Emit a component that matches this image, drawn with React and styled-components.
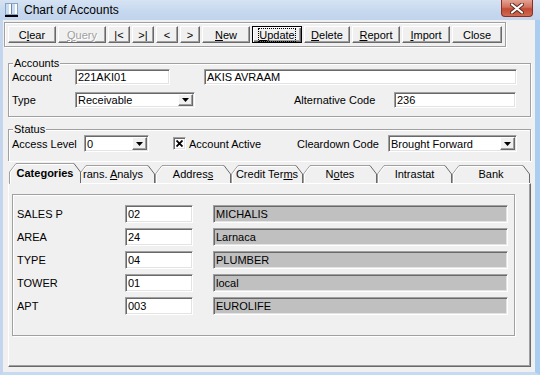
import React from "react";
import styled, { createGlobalStyle } from "styled-components";

const GlobalStyle = createGlobalStyle`
  html, body {
    margin: 0;
    padding: 0;
    background: #f0f0f0;
  }
  body {
    font-family: "Liberation Sans", Arial, sans-serif;
    font-size: 11px;
    color: #000;
  }
  u {
    text-decoration-thickness: 1px;
    text-underline-offset: 1px;
  }
`;

const toolButtons = [
  { text: "Clear", u: 1, w: 48 },
  { text: "Query", u: 0, w: 48, disabled: true },
  { text: "|<", w: 22 },
  { text: ">|", w: 22 },
  { text: "<", w: 22 },
  { text: ">", w: 20 },
  { text: "New", u: 0, w: 48 },
  { text: "Update", u: 0, w: 50, isDefault: true },
  { text: "Delete", u: 0, w: 46 },
  { text: "Report", u: 0, w: 48 },
  { text: "Import", u: 0, w: 48 },
  { text: "Close", w: 50 },
];

// "rans. Analys" is the clipped caption, so it sits against the left edge
const tabs = [
  { text: "Categories", u: 4, w: 68, active: true },
  { text: "rans. Analys", u: 6, w: 76, start: true },
  { text: "Address", u: 6, w: 76 },
  { text: "Credit Terms", u: 10, w: 72 },
  { text: "Notes", u: 1, w: 74 },
  { text: "Intrastat", w: 75 },
  { text: "Bank", w: 78 },
];

const categories = [
  { label: "SALES P", code: "02", desc: "MICHALIS" },
  { label: "AREA", code: "24", desc: "Larnaca" },
  { label: "TYPE", code: "04", desc: "PLUMBER" },
  { label: "TOWER", code: "01", desc: "local" },
  { label: "APT", code: "003", desc: "EUROLIFE" },
];

const Window = styled.div`
  width: 540px;
  height: 375px;
  display: flex;
  flex-direction: column;
  overflow: hidden;
`;

const TitleBar = styled.div`
  height: 20px;
  flex: none;
  display: flex;
  align-items: flex-start;
  padding-left: 4px;
  background: linear-gradient(to bottom, #d5e3f3 0%, #c6d8ee 60%, #c0d4ec 100%);
`;

const TitleIcon = styled.svg`
  margin-top: 3px;
  flex: none;
`;

const TitleText = styled.div`
  font-size: 12px;
  line-height: 20px;
  margin-left: 5px;
  color: #000;
`;

const CloseBox = styled.div`
  margin-left: auto;
  margin-right: 7px;
  width: 32px;
  height: 17px;
  box-sizing: border-box;
  border: 1px solid #8c2f22;
  border-top: none;
  border-radius: 0 0 4px 4px;
  background: linear-gradient(to bottom, #e4a394 0%, #d2705c 45%, #c24a34 55%, #cf6a51 100%);
  display: flex;
  align-items: center;
  justify-content: center;
`;

const Frame = styled.div`
  flex: 1;
  display: flex;
  flex-direction: column;
  background: #f0f0f0;
  border-left: 3px solid #c3d6ee;
  border-right: 5px solid #abcdef;
  border-bottom: 3px solid #c6daf1;
`;

const Toolbar = styled.div`
  display: flex;
  gap: 2px;
  width: fit-content;
  margin: 2px 0 0 1px;
  padding: 3px;
  border: 1px solid #a0a0a0;
  box-shadow: inset 1px 1px 0 #fff, 1px 1px 0 #fff;
`;

const ToolButton = styled.div`
  width: ${({ $w }) => $w}px;
  height: 17px;
  box-sizing: border-box;
  display: flex;
  align-items: center;
  justify-content: center;
  background: #f0f0f0;
  font-size: 11px;
  color: ${({ $disabled }) => ($disabled ? "#a0a0a0" : "#000")};
  text-shadow: ${({ $disabled }) => ($disabled ? "1px 1px 0 #fff" : "none")};
  border: 1px solid;
  border-color: ${({ $default }) =>
    $default ? "#000" : "#fff #696969 #696969 #fff"};
  box-shadow: ${({ $default }) =>
    $default
      ? "inset 1px 1px 0 #fff, inset -1px -1px 0 #696969, inset -2px -2px 0 #a0a0a0"
      : "inset -1px -1px 0 #a0a0a0"};
`;

const FocusText = styled.span`
  outline: 1px dotted #000;
  outline-offset: 0;
  line-height: 12px;
`;

const GroupBox = styled.fieldset`
  margin: ${({ $top }) => $top}px 4px 0 5px;
  padding: 0 4px ${({ $bottom }) => $bottom}px 3px;
  min-width: 0;
  border: 1px solid #a0a0a0;
  border-bottom: ${({ $open }) => ($open ? "none" : "1px solid #a0a0a0")};
  box-shadow: inset 1px 1px 0 #fff, 1px 1px 0 #fff;
  display: flex;
  flex-direction: column;
  gap: 7px;
`;

const Legend = styled.legend`
  padding: 0 1px;
  margin-left: 1px;
  line-height: 12px;
  font-size: 11px;
  background: #f0f0f0;
`;

const Row = styled.div`
  display: flex;
  align-items: center;
  height: ${({ $h }) => $h || 16}px;
`;

const Label = styled.div`
  width: ${({ $w }) => $w}px;
  margin-left: ${({ $ml }) => $ml || 0}px;
  flex: none;
  white-space: nowrap;
`;

const Edit = styled.div`
  width: ${({ $w }) => $w}px;
  height: ${({ $h }) => $h || 16}px;
  margin-left: ${({ $ml }) => $ml || 0}px;
  flex: none;
  box-sizing: border-box;
  display: flex;
  align-items: center;
  padding-left: 2px;
  background: ${({ $grey }) => ($grey ? "#c0c0c0" : "#fff")};
  border: 1px solid;
  border-color: #a0a0a0 #fff #fff #a0a0a0;
  box-shadow: inset 1px 1px 0 #696969, inset -1px -1px 0 #e3e3e3;
  white-space: nowrap;
  overflow: hidden;
`;

const DropButton = styled.div`
  width: 15px;
  align-self: stretch;
  margin: 1px 1px 1px auto;
  box-sizing: border-box;
  background: #f0f0f0;
  border: 1px solid;
  border-color: #fff #696969 #696969 #fff;
  box-shadow: inset -1px -1px 0 #a0a0a0;
  display: flex;
  align-items: center;
  justify-content: center;
`;

const CheckBox = styled.div`
  width: 13px;
  height: 13px;
  margin-left: ${({ $ml }) => $ml}px;
  flex: none;
  box-sizing: border-box;
  background: #fff;
  border: 1px solid;
  border-color: #a0a0a0 #fff #fff #a0a0a0;
  box-shadow: inset 1px 1px 0 #696969, inset -1px -1px 0 #e3e3e3;
  display: flex;
  align-items: center;
  justify-content: center;
`;

const TabControl = styled.div`
  flex: 1;
  display: flex;
  flex-direction: column;
  margin: 2px 4px 5px 5px;
`;

const TabRow = styled.div`
  display: flex;
  align-items: flex-end;
  height: 20px;
  padding-left: 3px;
  position: relative;
  z-index: 1;
`;

const Tab = styled.div`
  position: relative;
  width: ${({ $w }) => $w}px;
  height: ${({ $active }) => ($active ? 21 : 18)}px;
  margin: ${({ $active }) => ($active ? "0 -2px -1px -2px" : "0")};
  z-index: ${({ $active }) => ($active ? 2 : 1)};
  flex: none;
  display: flex;
  align-items: center;
  justify-content: ${({ $start }) => ($start ? "flex-start" : "center")};
  padding-left: ${({ $start }) => ($start ? 4 : 0)}px;
  padding-bottom: ${({ $active }) => ($active ? 2 : 0)}px;
  font-weight: ${({ $active }) => ($active ? "bold" : "normal")};
  box-sizing: border-box;
  white-space: nowrap;
  overflow: hidden;
`;

const TabOutline = styled.svg`
  position: absolute;
  left: 0;
  top: 0;
`;

const TabLabel = styled.span`
  position: relative;
`;

const TabPage = styled.div`
  flex: 1;
  border-top: 1px solid #fff;
  border-left: 1px solid #fff;
  border-right: 1px solid #696969;
  border-bottom: 1px solid #696969;
  box-shadow: inset -1px -1px 0 #a0a0a0;
`;

const InnerPanel = styled.div`
  width: 503px;
  height: 142px;
  box-sizing: border-box;
  margin: 10px 0 0 3px;
  padding: 10px 0 0 4px;
  border: 1px solid #a0a0a0;
  box-shadow: inset 1px 1px 0 #fff, 1px 1px 0 #fff;
  display: flex;
  flex-direction: column;
  gap: 5px;
`;

const Accel = ({ text, u }) =>
  u == null ? (
    text
  ) : (
    <>
      {text.slice(0, u)}
      <u>{text[u]}</u>
      {text.slice(u + 1)}
    </>
  );

const Arrow = () => (
  <svg width="7" height="4" viewBox="0 0 7 4">
    <path d="M0 0 H7 L3.5 4 Z" fill="#000" />
  </svg>
);

const Select = ({ w, h, ml, value }) => (
  <Edit $w={w} $h={h} $ml={ml}>
    {value}
    <DropButton>
      <Arrow />
    </DropButton>
  </Edit>
);

const TabShape = ({ w, h, active }) => (
  <TabOutline width={w} height={h} viewBox={`0 0 ${w} ${h}`}>
    <path d={`M0 ${h} V9 L7 0 H${w - 7} L${w} 9 V${h} Z`} fill="#f0f0f0" />
    <path d={`M0.5 ${h} V9 L7 0.5 H${w - 7}`} fill="none" stroke="#a0a0a0" />
    <path d={`M8 1.5 H${w - 8}`} fill="none" stroke="#fff" />
    <path d={`M1.5 ${h} V9.5 L7 2`} fill="none" stroke="#fff" />
    <path
      d={`M${w - 7} 0.5 L${w - 0.5} 9 V${active ? h - 1 : h}`}
      fill="none"
      stroke="#696969"
    />
  </TabOutline>
);

const App = () => (
  <>
    <GlobalStyle />
    <Window>
      <TitleBar>
        <TitleIcon width="15" height="15" viewBox="0 0 15 15">
          <rect x="1.5" y="0.5" width="12" height="11" fill="#fff" stroke="#8aa3c2" />
          <rect x="2" y="1" width="3" height="10" fill="#c8dcf2" />
          <rect x="8" y="1" width="3" height="10" fill="#c8dcf2" />
          <path d="M7.5 1 V11" stroke="#6f88a8" />
          <rect x="1" y="12" width="13" height="2" fill="#000" />
        </TitleIcon>
        <TitleText>Chart of Accounts</TitleText>
        <CloseBox>
          <svg width="14" height="11" viewBox="0 0 14 11">
            <path
              d="M2 1.5 L12 9.5 M12 1.5 L2 9.5"
              stroke="#5a2a22"
              strokeWidth="4"
              strokeLinecap="round"
            />
            <path
              d="M2 1.5 L12 9.5 M12 1.5 L2 9.5"
              stroke="#fff"
              strokeWidth="2.2"
              strokeLinecap="round"
            />
          </svg>
        </CloseBox>
      </TitleBar>

      <Frame>
        <Toolbar>
          {toolButtons.map((b) => (
            <ToolButton
              key={b.text}
              $w={b.w}
              $disabled={b.disabled}
              $default={b.isDefault}
            >
              {b.isDefault ? (
                <FocusText>
                  <Accel text={b.text} u={b.u} />
                </FocusText>
              ) : (
                <Accel text={b.text} u={b.u} />
              )}
            </ToolButton>
          ))}
        </Toolbar>

        <GroupBox $top={10} $bottom={8}>
          <Legend>Accounts</Legend>
          <Row>
            <Label $w={63}>Account</Label>
            <Edit $w={95}>221AKI01</Edit>
            <Edit $w={313} $ml={34}>AKIS AVRAAM</Edit>
          </Row>
          <Row>
            <Label $w={63}>Type</Label>
            <Select w={120} value="Receivable" />
            <Label $w={100} $ml={99}>Alternative Code</Label>
            <Edit $w={122}>236</Edit>
          </Row>
        </GroupBox>

        <GroupBox $top={6} $bottom={9} $open>
          <Legend>Status</Legend>
          <Row $h={17}>
            <Label $w={72}>Access Level</Label>
            <Select w={65} h={17} value="0" />
            <CheckBox $ml={24}>
              <svg width="7" height="7" viewBox="0 0 7 7">
                <path d="M0.5 0.5 L6.5 6.5 M6.5 0.5 L0.5 6.5" stroke="#000" strokeWidth="1.8" />
              </svg>
            </CheckBox>
            <Label $w={108} $ml={3}>Account Active</Label>
            <Label $w={91}>Cleardown Code</Label>
            <Select w={129} h={17} value="Brought Forward" />
          </Row>
        </GroupBox>

        <TabControl>
          <TabRow>
            {tabs.map((t) => {
              const w = t.active ? t.w + 4 : t.w;
              const h = t.active ? 21 : 18;
              return (
                <Tab key={t.text} $w={w} $active={t.active} $start={t.start}>
                  <TabShape w={w} h={h} active={t.active} />
                  <TabLabel>
                    <Accel text={t.text} u={t.u} />
                  </TabLabel>
                </Tab>
              );
            })}
          </TabRow>
          <TabPage>
            <InnerPanel>
              {categories.map((c) => (
                <Row key={c.label} $h={18}>
                  <Label $w={108}>{c.label}</Label>
                  <Edit $w={68} $h={18}>{c.code}</Edit>
                  <Edit $w={295} $h={18} $ml={20} $grey>
                    {c.desc}
                  </Edit>
                </Row>
              ))}
            </InnerPanel>
          </TabPage>
        </TabControl>
      </Frame>
    </Window>
  </>
);

export default App;
